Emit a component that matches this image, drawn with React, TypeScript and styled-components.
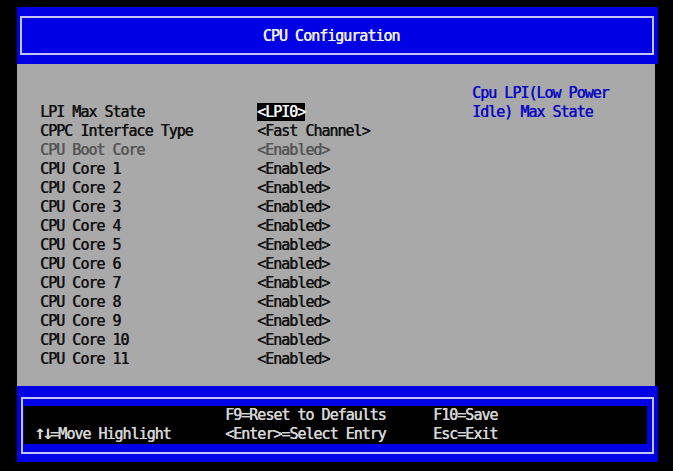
import React from 'react';
import styled, { createGlobalStyle } from 'styled-components';

interface Setting {
  label: string;
  value: string;
  disabled?: boolean;
  selected?: boolean;
}

const settings: Setting[] = [
  { label: 'LPI Max State', value: '<LPI0>', selected: true },
  { label: 'CPPC Interface Type', value: '<Fast Channel>' },
  { label: 'CPU Boot Core', value: '<Enabled>', disabled: true },
  ...Array.from({ length: 11 }, (_, i) => ({ label: `CPU Core ${i + 1}`, value: '<Enabled>' })),
];

const App: React.FC = () => {
  return (
    <>
      <GlobalStyle />
      <Screen>
        <Header>
          <TitleFrame>
            <Title>CPU Configuration</Title>
          </TitleFrame>
        </Header>
        <Body>
          <SettingList>
            {settings.map(s => (
              <Row key={s.label} disabled={s.disabled}>
                <Label>{s.label}</Label>
                <Value>{s.selected ? <Selected>{s.value}</Selected> : s.value}</Value>
              </Row>
            ))}
          </SettingList>
          <Help>
            Cpu LPI(Low Power
            <br />
            Idle) Max State
          </Help>
        </Body>
        <Footer>
          <FooterFrame>
            <KeyBox>
              <KeyCol>
                <KeyLine>&nbsp;</KeyLine>
                <KeyLine>
                  <Arrows>↑↓</Arrows>=Move Highlight
                </KeyLine>
              </KeyCol>
              <KeyCol>
                <KeyLine>F9=Reset to Defaults</KeyLine>
                <KeyLine>&lt;Enter&gt;=Select Entry</KeyLine>
              </KeyCol>
              <KeyCol>
                <KeyLine>F10=Save</KeyLine>
                <KeyLine>Esc=Exit</KeyLine>
              </KeyCol>
            </KeyBox>
          </FooterFrame>
        </Footer>
      </Screen>
    </>
  );
};

export default App;

const GlobalStyle = createGlobalStyle`
  html, body {
    margin: 0;
    padding: 0;
    background: #000;
  }
  body {
    width: 673px;
    height: 471px;
    overflow: hidden;
    font-family: 'DejaVu Sans Mono', 'Liberation Mono', monospace;
    font-size: 15px;
    letter-spacing: -1px;
    line-height: 19px;
    text-shadow: 0.5px 0 0 currentColor;
  }
`;

const Screen = styled.div`
  width: 641px;
  padding: 7px 15px 9px 17px;
  display: flex;
  flex-direction: column;
`;

const Header = styled.div`
  background: #0000e4;
  height: 57px;
  box-sizing: border-box;
  padding: 9px 4px 9px 3px;
`;

const TitleFrame = styled.div`
  height: 39px;
  box-sizing: border-box;
  border: 2px solid #c4c4f4;
  display: flex;
  align-items: center;
  justify-content: center;
  padding-right: 12px;
`;

const Title = styled.div`
  color: #f0f0f0;
  line-height: 35px;
  padding-top: 1px;
`;

const Body = styled.div`
  background: #a9a9a9;
  height: 322px;
  margin-right: 3px;
  box-sizing: border-box;
  padding: 20px 0 0 23px;
  display: flex;
`;

const SettingList = styled.div`
  width: 432px;
  margin-top: 19px;
  display: flex;
  flex-direction: column;
`;

const Row = styled.div<{ disabled?: boolean }>`
  display: flex;
  height: 19px;
  color: ${props => (props.disabled ? '#555555' : '#131313')};
`;

const Label = styled.div`
  width: 217px;
  white-space: pre;
`;

const Value = styled.div`
  white-space: pre;
`;

const Selected = styled.span`
  background: #000;
  color: #f4f4f4;
`;

const Help = styled.div`
  color: #0a0ac4;
  white-space: pre;
`;

const Footer = styled.div`
  background: #0000e4;
  height: 76px;
  box-sizing: border-box;
  padding: 11px 4px 8px 4px;
`;

const FooterFrame = styled.div`
  height: 57px;
  box-sizing: border-box;
  border: 2px solid #c4c4f4;
  padding: 7px 5px 7px 1px;
`;

const KeyBox = styled.div`
  background: #000;
  height: 38px;
  padding-left: 10px;
  display: grid;
  grid-template-columns: 191px 208px 1fr;
  color: #d6d6d6;
`;

const KeyCol = styled.div`
  display: flex;
  flex-direction: column;
`;

const KeyLine = styled.div`
  height: 19px;
  white-space: pre;
`;

const Arrows = styled.span`
  font-size: 19px;
  letter-spacing: -3.4px;
  line-height: 0;
`;
